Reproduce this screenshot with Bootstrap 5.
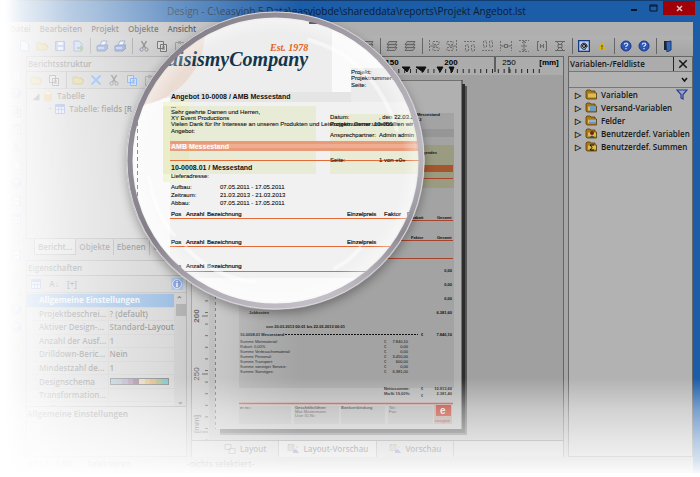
<!DOCTYPE html>
<html lang="de">
<head>
<meta charset="utf-8">
<meta name="viewport" content="width=device-width, initial-scale=1">
<title>Design - Projekt Angebot.lst</title>
<link href="https://cdn.jsdelivr.net/npm/bootstrap@5.3.0/dist/css/bootstrap.min.css" rel="stylesheet">
<style>
body{font:600 8px/14px "Open Sans","Noto Sans",sans-serif;color:#151515;background:#fff;overflow-x:hidden}
button{font:inherit;color:inherit;background:none;border:0;padding:0}
svg{display:block}
.app-window{background:#a6a6a6;border-right:7px solid #1c5da8;box-shadow:inset 0 -5px #4d86c4}
.title-row{height:22px;background:#1c5da8;margin-right:-7px;border-top:1px solid #123d70;color:#0b1c33;font-weight:400;font-size:10px;line-height:21px;padding-left:167px}
.close-btn{width:32px;height:14px;background:#a00008;color:#ddd;font-size:10px;line-height:14px;margin-right:5px}
.win-btn{width:19px;height:15px}
.menu-row{height:14px;background:#afafaf;padding-left:10px;gap:9px}
.tools{height:20px;padding-left:15px;background:linear-gradient(#b2b2b2,#a4a4a4)}
.tools button,.tools-sm button{width:18px;height:16px;display:grid;place-items:center}
.tools svg,.tools-sm svg,.strip svg{width:12px;height:12px}
.divider{width:6px;flex:none;display:grid;place-items:center}
.divider::after{content:"";width:1px;height:16px;background:#666}
.main-row{height:401px}
.strip{width:26px;padding:10px 0 0 9px;opacity:.6}
.strip button{height:18px;width:14px;display:grid;place-items:center}
.left-col{width:161px}
.right-col{width:125px;border:1px solid #666;background:#b2b2b2}
.pane{border:1px solid #777;background:#b2b2b2}
.pane-head{height:15px;border-bottom:1px solid #777;padding-left:1px;background:#acacac}
.tools-sm{height:17px;background:#a9a9a9;border-bottom:1px solid #888}
.tree{height:149px;padding:0 0 0 6px}
.tree-line{height:13px;gap:3px}
.tab-row{height:17px;padding-left:8px}
.tab-row button{padding:0 3px;height:16px;border-right:1px solid #666}
.tab-row .on{background:#bcbcbc;border:1px solid #666;border-top:0}
.props{height:114px;overflow:hidden}
.props table{width:149px;table-layout:fixed;height:123px;line-height:12px;border-collapse:collapse}
.props td{padding:0 0 0 1px;border:1px solid #a2a2a2;white-space:nowrap}
.key-col{width:81px}
.props td:first-child{padding-left:12px;border-left:0}
.props .group td{background:#3f7fc6;color:#dbe8f8;font-weight:700}
.sbar{width:11px;background:#a5a5a5;line-height:11px}
.sbar i{width:10px;height:12px;background:#707070}
.swatch{flex:1;height:5px}
.swatches{width:59px}
.center{border:1px solid #666;border-bottom:0;background:#a2a2a2}
.ruler-h{height:18px;background:#acacac;overflow:hidden}
.ruler-v{width:17px;background:#acacac;overflow:hidden}
.canvas-area{padding:5px 0 0 6px;overflow:hidden;background:#a0a0a0}
.bottom-tabs{height:17px;background:#b4b4b4;border-top:1px solid #555}
.bottom-tabs button{padding:0 12px;gap:4px;border-right:1px solid #777}
.bottom-tabs .on{background:#c4c4c4}
.status{height:16px;background:#a8a8a8;padding-left:28px}
.field-select{height:16px;border:0;border-bottom:1px solid #777;background:#b2b2b2;width:100%;appearance:none}
.field-list{padding:0 0 0 6px}
.field-list li{height:13px;gap:4px}
.field-list svg{width:12px;height:11px}
.fade-left,.fade-bottom,.fade-corner{inset:0;pointer-events:none}
.fade-left{background:linear-gradient(90deg,#fff 5px,rgba(255,255,255,.86) 25px,rgba(255,255,255,.64) 70px,rgba(255,255,255,.46) 130px,rgba(255,255,255,.3) 190px,transparent 300px)}
.fade-bottom{background:linear-gradient(transparent 378px,rgba(255,255,255,.42) 410px,rgba(255,255,255,.68) 440px,rgba(255,255,255,.82) 460px,#fff 477px)}
.fade-corner{background:radial-gradient(ellipse 240px 380px at 20px 300px,rgba(255,255,255,.4),rgba(255,255,255,.25) 60%,transparent)}
.lens{left:126px;top:11px;width:299px;height:299px;border-radius:50%;box-shadow:0 4px 10px rgba(0,0,0,.3)}
svg text{font-family:"Liberation Sans",Arial,sans-serif}
svg{font-weight:400}
text.brand{font-family:"Liberation Serif",serif;font-style:italic;font-weight:700}
</style>
<script src="https://cdn.jsdelivr.net/npm/bootstrap@5.3.0/dist/js/bootstrap.bundle.min.js"></script>
</head>
<body>
<svg width="0" height="0" class="position-absolute" aria-hidden="true">
<symbol id="i-new" viewBox="0 0 12 12"><path d="M2.500 1h5l3 3v7h-8z" fill="#c8d8f0" stroke="#4668b8"/></symbol>
<symbol id="i-open" viewBox="0 0 12 12"><path d="M1 10V3h4l1 1h4v2h2l-2 4z" fill="#c6a528" stroke="#866c10"/></symbol>
<symbol id="i-save" viewBox="0 0 12 12"><path d="M1.500 1.500h9v9h-9z" fill="#5d83cc" stroke="#27499c"/><path d="M4 2h5v3H4zM4 7h5v3H4z" fill="#cfdcf3"/></symbol>
<symbol id="i-export" viewBox="0 0 12 12"><path d="M2 1h5l3 3v7H2z" fill="#9bb6e6" stroke="#3357a6"/><path d="M5 7h3V5l4 3-4 3V9H5z" fill="#3b8b30"/></symbol>
<symbol id="i-print" viewBox="0 0 12 12"><path d="M1 6l3-1h8v3l-3 3H1z" fill="#436ec2" stroke="#213f87"/><path d="M4 5l2-4h5L9 5z" fill="#e4ecf8" stroke="#3357a6"/><path d="M2 8h6" stroke="#dde8fa"/></symbol>
<symbol id="i-cut" viewBox="0 0 12 12"><path d="M3.500 1l4 7M8.500 1l-4 7" stroke="#333" stroke-width="1.500"/><circle cx="3.500" cy="9.500" r="1.600" fill="none" stroke="#335"/><circle cx="8.500" cy="9.500" r="1.600" fill="none" stroke="#335"/></symbol>
<symbol id="i-copy" viewBox="0 0 12 12"><path d="M1.500 1.500h6v7h-6zM4.500 4.500h6v7h-6z" fill="#bbb" stroke="currentColor"/><path d="M6 7h3M6 9h3" stroke="currentColor"/></symbol>
<symbol id="i-paste" viewBox="0 0 12 12"><path d="M1.500 2.500h8v9h-8z" fill="none" stroke="#666"/><path d="M4 1h3v3H4z" fill="#777"/></symbol>
<symbol id="i-stack" viewBox="0 0 12 12"><path d="M3 7.500h8l-2 3H1zM3 4.500h8l-2 3H1zM3 1.500h8l-2 3H1z" fill="#9c9c9c" stroke="#666"/></symbol>
<symbol id="i-alh" viewBox="0 0 12 12"><path d="M1.500 0v12M5 1.500h6v3H5zM5 7.500h6v3H5z" fill="none" stroke="#707070" stroke-dasharray="2 1"/><path d="M2 6h7" stroke="#707070"/></symbol>
<symbol id="i-alr" viewBox="0 0 12 12"><path d="M10.500 0v12M1 1.500h6v3H1zM1 7.500h6v3H1z" fill="none" stroke="#707070" stroke-dasharray="2 1"/><path d="M3 6h7" stroke="#707070"/></symbol>
<symbol id="i-alt" viewBox="0 0 12 12"><path d="M0 1.500h12M1.500 5v6h3V5zM7.500 5v6h3V5z" fill="none" stroke="#707070" stroke-dasharray="2 1"/></symbol>
<symbol id="i-alb" viewBox="0 0 12 12"><path d="M0 10.500h12M1.500 1v6h3V1zM7.500 1v6h3V1z" fill="none" stroke="#707070" stroke-dasharray="2 1"/></symbol>
<symbol id="i-wid" viewBox="0 0 12 12"><path d="M.5 1v10M11.500 1v10" stroke="#707070" stroke-dasharray="2 1"/><path d="M1 6h3M8 6h3M4.500 4.500h3v3h-3z" fill="none" stroke="#666"/></symbol>
<symbol id="i-hei" viewBox="0 0 12 12"><path d="M1 .5h10M1 11.500h10" stroke="#707070" stroke-dasharray="2 1"/><path d="M6 1v10M4 3l2-2 2 2M4 9l2 2 2-2M3 6h6" fill="none" stroke="#707070"/></symbol>
<symbol id="i-brk" viewBox="0 0 12 12"><path d="M3 1.500H1.500v9H3M9 1.500h1.500v9H9M4.500 4v4M7.500 4v4M5 6h2" fill="none" stroke="#666"/></symbol>
<symbol id="i-hgl" viewBox="0 0 12 12"><path d="M1 1.500h10M1 10.500h10M4 4.500h4v3H4zM3 2l2 2M9 2L7 4M3 10l2-2M9 10L7 8" fill="none" stroke="#666"/></symbol>
<symbol id="i-at" viewBox="0 0 12 12"><path d="M.5.500h11v11H.5z" fill="#b9c9e6" stroke="#173a84" stroke-width="1.500"/><circle cx="6" cy="6" r="1.500" fill="none" stroke="#111"/><path d="M7.500 4.500v2.500h1.500V6a3 3 0 1 0-1 2.500" fill="none" stroke="#111"/></symbol>
<symbol id="i-warn" viewBox="0 0 12 12"><path d="M6 2l4 8H2z" fill="#d8b800"/><path d="M6 5v2.500M6 8.300v1" stroke="#333"/></symbol>
<symbol id="i-help" viewBox="0 0 12 12"><circle cx="6" cy="6" r="5" fill="#2d55b4" stroke="#1a378a"/><path d="M4.200 4.600q.2-1.600 1.900-1.600 1.700.1 1.700 1.500Q7.700 5.500 6 6.200V7M6 8v1.300" fill="none" stroke="#dce6fa" stroke-width="1.200"/></symbol>
<symbol id="i-info" viewBox="0 0 12 12"><path d="M0 0h12v12H0z" fill="#5f93d6"/><circle cx="6" cy="6" r="4.500" fill="#2d55c4" stroke="#dce6fa" stroke-width=".8"/><path d="M6 5v4M6 3v1.200" stroke="#fff" stroke-width="1.400"/></symbol>
<symbol id="i-door" viewBox="0 0 12 12"><path d="M2 1h7v9H2z" fill="#222"/><path d="M4 2l5-1v9l-4 2z" fill="#3568b4" stroke="#173a74"/></symbol>
<symbol id="i-x" viewBox="0 0 12 12"><path d="M1.500 1.500l9 9M10.500 1.500l-9 9" stroke="currentColor" stroke-width="1.800"/></symbol>
<symbol id="i-folder" viewBox="0 0 12 11"><path d="M1 9V2l1-1h3l1 1h4v2h1.500v6H2z" fill="#a77a16" stroke="#5b3d08" stroke-width=".8"/><path d="M3 4.500h8v4H3z" fill="#ddbc55"/></symbol>
<symbol id="i-db" viewBox="0 0 12 12"><path d="M2 3v7q4 3 8 0V3z" fill="#c38b2a"/><ellipse cx="6" cy="3" rx="4" ry="1.800" fill="#e9c776" stroke="#a97a22" stroke-width=".6"/></symbol>
<symbol id="i-grid" viewBox="0 0 12 12"><path d="M1.500 1.500h9v9h-9z" fill="#b9cdf2" stroke="#2950b0"/><path d="M2 3h8" stroke="#2950b0" stroke-width="2"/><path d="M4.500 3v7M7.500 3v7M2 6.500h8" stroke="#2950b0" stroke-width=".8"/></symbol>
<symbol id="i-layout" viewBox="0 0 12 12"><path d="M1 1.500h6v5H1zM5 5.500h6v5H5z" fill="#bbb" stroke="#555"/></symbol>
<symbol id="i-prev" viewBox="0 0 12 12"><path d="M1 1.500h6v6H1z" fill="#999" stroke="#666" stroke-dasharray="2 1"/><path d="M6 8l3-2 3 4H6z" fill="#3342a8"/><path d="M9 3h2v2H9z" fill="#b8a530"/></symbol>
</svg>

<div class="position-relative">
<div class="app-window d-flex flex-column">
 <header class="title-row d-flex align-items-start">
  <span class="flex-grow-1 text-nowrap">Design - C:\easyjob 5 Data\easyjobde\shareddata\reports\Projekt Angebot.lst</span>
  <button class="win-btn" aria-label="Minimieren"><svg viewBox="0 0 19 15"><path d="M6 9h6" stroke="#06142a" stroke-width="2"/></svg></button>
  <button class="win-btn" aria-label="Maximieren"><svg viewBox="0 0 19 15"><path d="M6 4h7v6H6zM6 5h7" fill="none" stroke="#06142a"/></svg></button>
  <button class="close-btn" aria-label="Schließen"><svg viewBox="0 0 32 14" height="14"><path d="M14 5l5 5M19 5l-5 5" stroke="#d8c0c0" stroke-width="1.500"/></svg></button>
 </header>
 <nav class="menu-row d-flex"><button>Datei</button><button>Bearbeiten</button><button>Projekt</button><button>Objekte</button><button>Ansicht</button></nav>
 <div class="tools d-flex align-items-center" role="toolbar" aria-label="Werkzeuge">
  <button aria-label="Neu"><svg><use href="#i-new"/></svg></button><button aria-label="Öffnen"><svg><use href="#i-open"/></svg></button><button aria-label="Speichern"><svg><use href="#i-save"/></svg></button><button aria-label="Export"><svg><use href="#i-export"/></svg></button><span class="divider"></span>
  <button aria-label="Drucken"><svg><use href="#i-print"/></svg></button><button aria-label="Probedruck"><svg><use href="#i-print"/></svg></button><span class="divider"></span>
  <button aria-label="Ausschneiden"><svg><use href="#i-cut"/></svg></button><button aria-label="Kopieren"><svg><use href="#i-copy"/></svg></button><button aria-label="Einfügen"><svg><use href="#i-paste"/></svg></button>
  <span class="flex-grow-1"></span>
  <button aria-label="Ebene"><svg><use href="#i-stack"/></svg></button><span class="divider"></span><button aria-label="Nach vorn"><svg><use href="#i-stack"/></svg></button><button aria-label="Nach hinten"><svg><use href="#i-stack"/></svg></button><span class="divider"></span>
  <button aria-label="Links"><svg><use href="#i-alh"/></svg></button><button aria-label="Rechts"><svg><use href="#i-alr"/></svg></button><button aria-label="Oben"><svg><use href="#i-alt"/></svg></button><button aria-label="Unten"><svg><use href="#i-alb"/></svg></button><button aria-label="Breite"><svg><use href="#i-wid"/></svg></button><button aria-label="Höhe"><svg><use href="#i-hei"/></svg></button><button aria-label="Abstand"><svg><use href="#i-brk"/></svg></button><button aria-label="Verteilen"><svg><use href="#i-hgl"/></svg></button><span class="divider"></span>
  <button aria-label="Objekt"><svg><use href="#i-at"/></svg></button><button aria-label="Warnung"><svg><use href="#i-warn"/></svg></button><span class="divider"></span>
  <button aria-label="Hilfe"><svg><use href="#i-help"/></svg></button><button aria-label="Kontexthilfe"><svg><use href="#i-help"/></svg></button><span class="divider"></span>
  <button class="me-3" aria-label="Beenden"><svg><use href="#i-door"/></svg></button>
 </div>

 <div class="main-row d-flex">
  <div class="strip d-flex flex-column">
   <button aria-label="Auswahl"><svg><use href="#i-new"/></svg></button><button aria-label="Lupe"><svg><use href="#i-help"/></svg></button><button aria-label="Formular"><svg><use href="#i-copy"/></svg></button><button aria-label="Text"><svg><use href="#i-grid"/></svg></button><button aria-label="Linie"><svg><use href="#i-cut"/></svg></button><button aria-label="Rechteck"><svg><use href="#i-new"/></svg></button><button aria-label="Kreis"><svg><use href="#i-help"/></svg></button><button aria-label="Bild"><svg><use href="#i-save"/></svg></button><button aria-label="Barcode"><svg><use href="#i-grid"/></svg></button><button aria-label="Tabelle"><svg><use href="#i-paste"/></svg></button><button aria-label="RTF"><svg><use href="#i-save"/></svg></button><button aria-label="Person"><svg><use href="#i-db"/></svg></button><button aria-label="Diagramm"><svg><use href="#i-export"/></svg></button><button aria-label="Messgerät"><svg><use href="#i-help"/></svg></button><button aria-label="Web"><svg><use href="#i-help"/></svg></button><button aria-label="Torte"><svg><use href="#i-db"/></svg></button>
  </div>

  <div class="left-col d-flex flex-column">
   <section class="pane">
    <div class="pane-head">Berichtsstruktur</div>
    <div class="tools-sm d-flex">
     <button aria-label="Neu"><svg><use href="#i-open"/></svg></button><button aria-label="Duplizieren"><svg><use href="#i-copy"/></svg></button><span class="divider"></span><button aria-label="Bearbeiten"><svg><use href="#i-open"/></svg></button><button class="text-primary" aria-label="Löschen"><svg><use href="#i-x"/></svg></button><button aria-label="Ausschneiden"><svg><use href="#i-cut"/></svg></button><button class="text-primary" aria-label="Kopieren"><svg><use href="#i-copy"/></svg></button><button aria-label="Einfügen"><svg><use href="#i-paste"/></svg></button>
    </div>
    <div class="tree">
     <div class="tree-line d-flex align-items-center"><span>◢</span><svg width="12" height="12"><use href="#i-db"/></svg>Tabelle</div>
     <div class="tree-line d-flex align-items-center ps-3"><span>·</span><svg width="12" height="12"><use href="#i-grid"/></svg><span class="text-nowrap">Tabelle: fields [R</span></div>
    </div>
   </section>
   <div class="tab-row d-flex mb-1"><button class="on">Bericht...</button><button>Objekte</button><button>Ebenen</button><button class="border-0">V</button></div>
   <section class="pane flex-grow-1">
    <div class="pane-head">Eigenschaften</div>
    <div class="tools-sm d-flex"><button aria-label="Kategorien"><svg><use href="#i-grid"/></svg></button><button>A↓</button><button>[+]</button><button class="ms-auto" aria-label="Info"><svg><use href="#i-info"/></svg></button></div>
    <div class="props d-flex border-bottom border-secondary">
     <table>
      <colgroup><col class="key-col"><col></colgroup>
      <tr class="group"><td colspan="2">Allgemeine Einstellungen</td></tr>
      <tr><td>Projektbeschrei...</td><td>? (default)</td></tr>
      <tr><td>Aktiver Design-...</td><td>Standard-Layout</td></tr>
      <tr><td>Anzahl der Ausf...</td><td>1</td></tr>
      <tr><td>Drilldown-Beric...</td><td>Nein</td></tr>
      <tr><td>Mindestzahl de...</td><td>1</td></tr>
      <tr><td>Designschema</td><td><div class="swatches d-flex border border-dark"><i class="swatch" style="background:#5f98a4"></i><i class="swatch" style="background:#708898"></i><i class="swatch" style="background:#6d6890"></i><i class="swatch" style="background:#704070"></i><i class="swatch" style="background:#4e2048"></i><i class="swatch" style="background:#cbb07c"></i><i class="swatch" style="background:#c8951f"></i><i class="swatch" style="background:#c87420"></i><i class="swatch" style="background:#6b8428"></i><i class="swatch" style="background:#139090"></i></div></td></tr>
      <tr><td>Transformation...</td><td></td></tr>
      <tr><td>Mailparameter</td><td></td></tr>
     </table>
     <div class="sbar d-flex flex-column align-items-center justify-content-between"><div>⌃<i class="d-block"></i></div><div>⌄</div></div>
    </div>
    <div class="fw-bold">Allgemeine Einstellungen</div>
   </section>
  </div>

  <main class="center flex-grow-1 d-flex flex-column mx-1">
   <div class="ruler-h"><svg width="371" height="18"><defs><pattern id="tick" x="259" width="5.850" height="18" patternUnits="userSpaceOnUse"><path d="M.5 12v4" stroke="#222"/></pattern></defs><path d="M20 0h270v18H20zM290 0h62v18h-62z" fill="url(#tick)"/><path d="M303 0v15M259 10v6M317 10v6M210 10h8l-3 5zM224 10h10l-3 5zM245 10h6l-3 5zM257 10h5l-2 5z" stroke="#111" fill="#111"/><text x="200" y="8" text-anchor="middle" font-size="8" font-weight="700">150</text><text x="259" y="8" text-anchor="middle" font-size="8" font-weight="700">200</text><text x="317" y="8" text-anchor="middle" font-size="8">250</text><text x="357" y="8" text-anchor="middle" font-size="8" font-weight="700">[mm]</text></svg></div>
   <div class="d-flex flex-grow-1 overflow-hidden">
    <div class="ruler-v"><svg width="17" height="366"><defs><pattern id="tickv" y="5" width="17" height="11.600" patternUnits="userSpaceOnUse"><path d="M13 .5h3" stroke="#222"/></pattern></defs><path d="M0 0h17v366H0z" fill="url(#tickv)"/><path d="M10 241h6M10 299h6M10 357h6" stroke="#222"/><g font-size="8" text-anchor="middle"><text transform="translate(7 241) rotate(-90)" font-weight="700">200</text><text transform="translate(7 299) rotate(-90)">250</text><text transform="translate(7 349) rotate(-90)">[mm]</text></g></svg></div>
    <div class="canvas-area flex-grow-1">
     <svg width="252" height="355" viewBox="215 80 252 355">
      <path d="M220 86h247v349H220z" fill="#555"/><path d="M220 84h245v349H220z" fill="#2b2b2b"/>
      <path d="M215 80h247v349H215z" fill="#b0b0b0"/><path d="M215 80h247v349" fill="none" stroke="#333"/>
      <path d="M215.500 80v349" stroke="#3636b8" stroke-dasharray="3 3"/>
      <path d="M239 113h215v275H239z" fill="#a3a3a3"/><path d="M400 129h54v8h-54z" fill="#969696"/><path d="M400 145h54v43h-54z" fill="#9a9b80"/>
      <path d="M400 165h53v7h-53z" fill="#a4562f"/><path d="M390 178.500h63M390 220.500h63M390 240.500h63M370 258.500h83" stroke="#a8442c"/>
      <path d="M239 403.500h214" stroke="#b83220" stroke-width="1.500"/>
      <path d="M239 406h52v18h-52zM294 406h45v18h-45zM341 406h44v18h-44zM388 406h45v18h-45z" fill="#a2a2a2"/>
      <g font-size="4" font-weight="700" fill="#111">
       <text x="417" y="116">Messestand</text><text x="417" y="121">13</text><text x="423" y="154">gendes</text>
       <text x="411" y="219">Rabatt</text><text x="437" y="219">Gesamt</text><text x="411" y="239">Faktor</text><text x="437" y="239">Gesamt</text>
       <g text-anchor="end"><text x="452" y="272">0,00</text><text x="452" y="286">0,00</text><text x="452" y="300">0,00</text><text x="452" y="314">6.381,60</text><text x="452" y="336">7.840,10</text><text x="452" y="390">10.913,60</text><text x="452" y="395">2.381,40</text></g>
       <text x="249" y="314">Jobkosten</text><text x="266" y="328">von 20.03.2013 00:01 bis 22.03.2013 00:01</text>
       <text x="240" y="336">10-0008.01 Messestand</text><path d="M285 334.500h133" stroke="#111" stroke-dasharray="2 1"/><text x="421" y="336">€</text>
       <text x="384" y="390">Nettosumme:</text><text x="384" y="395">MwSt 19,00%:</text><text x="421" y="390">€</text><text x="421" y="397">€</text>
       <text x="295" y="409">Geschäftsführer</text><text x="341" y="409">Bankverbindung</text><text x="240" y="409">er nr.:</text>
      </g>
      <g font-size="4" fill="#111"><text x="240" y="343">Summe Mietmaterial:</text><text x="240" y="348">Rabatt: 0,00%</text><text x="240" y="353">Summe Verbrauchsmaterial:</text><text x="240" y="358">Summe Personal:</text><text x="240" y="363">Summe Transport:</text><text x="240" y="368">Summe sonstiger Service:</text><text x="240" y="373">Summe Sonstiges:</text>
       <text x="384" y="343">€</text><text x="384" y="348">€</text><text x="384" y="353">€</text><text x="384" y="358">€</text><text x="384" y="363">€</text><text x="384" y="368">€</text><text x="384" y="373">€</text>
       <g text-anchor="end"><text x="408" y="343">7.840,10</text><text x="408" y="348">0,00</text><text x="408" y="353">0,00</text><text x="408" y="358">3.450,00</text><text x="408" y="363">600,00</text><text x="408" y="368">0,00</text><text x="408" y="373">6.381,00</text></g>
       <text x="295" y="413">Max Mustermann</text><text x="295" y="417">User ID-Nr.:</text><text x="389" y="409">Tel.:</text><text x="389" y="413">Fax:</text></g>
      <path d="M434 405h18v19h-18z" fill="#a58f88"/><path d="M436 405h15v11h-15z" fill="#b02010"/><text x="440" y="414" font-size="10" font-weight="700" fill="#e8d8d4">e</text><text x="435" y="422" font-size="4" font-weight="700" fill="#8c2018">easyjob</text>
     </svg>
    </div>
   </div>
   <div class="bottom-tabs d-flex">
    <span class="px-3"></span><button class="d-flex align-items-center ps-0"><svg width="12" height="12"><use href="#i-layout"/></svg>Layout</button><button class="on d-flex align-items-center px-2"><svg width="12" height="12"><use href="#i-prev"/></svg>Layout-Vorschau</button><button class="d-flex align-items-center"><svg width="12" height="12"><use href="#i-prev"/></svg>Vorschau</button>
   </div>
  </main>

  <aside class="right-col">
   <div class="pane-head d-flex"><label for="feld" class="flex-grow-1">Variablen-/Feldliste</label><button class="border-start border-dark px-1" aria-label="Schließen"><svg width="10" height="10"><use href="#i-x"/></svg></button></div>
   <div class="d-flex position-relative"><select class="field-select" id="feld"><option></option></select><svg class="position-absolute end-0 me-1 mt-1" width="7" height="7"><path d="M1 2l2.500 3L6 2" fill="none" stroke="#111" stroke-width="1.500"/></svg></div>
   <ul class="field-list list-unstyled m-0">
    <li class="d-flex align-items-center"><span>▷</span><svg><use href="#i-folder"/></svg>Variablen<svg class="ms-auto me-1" viewBox="0 0 12 11"><path d="M1 1h10L7 5.500V10L5 9V5.500z" fill="#9ab" stroke="#2a3c90" stroke-width="1.200"/></svg></li>
    <li class="d-flex align-items-center"><span>▷</span><svg viewBox="0 0 12 11"><use href="#i-folder"/><path d="M5 4h6v5H5z" fill="#6f9cc4"/></svg>Versand-Variablen</li>
    <li class="d-flex align-items-center"><span>▷</span><svg viewBox="0 0 12 11"><use href="#i-folder"/><path d="M4 4h7v5H4z" fill="#6c93c4"/><path d="M4 6h7" stroke="#ccd"/></svg>Felder</li>
    <li class="d-flex align-items-center"><span>▷</span><svg viewBox="0 0 12 11"><use href="#i-folder"/><circle cx="7" cy="5" r="2" fill="#722"/><path d="M4 10q3-5 6 0z" fill="#264"/></svg>Benutzerdef. Variablen</li>
    <li class="d-flex align-items-center"><span>▷</span><svg viewBox="0 0 12 11"><use href="#i-folder"/><path d="M9 4H5l2 2.500L5 9h4" fill="none" stroke="#111"/></svg>Benutzerdef. Summen</li>
   </ul>
  </aside>
 </div>
 <footer class="status d-flex"><span>97.17, -3.69</span><span class="ps-3">Selektieren</span><span class="ps-5 ms-2">-nichts selektiert-</span></footer>
</div>
<div class="position-absolute fade-left"></div><div class="position-absolute fade-corner"></div><div class="position-absolute fade-bottom"></div>

<div class="lens position-absolute">
 <svg width="299" height="299" viewBox="126 11 299 299">
  <defs>
   <clipPath id="glass"><circle cx="275.500" cy="160.500" r="145"/></clipPath>
   <linearGradient id="rim" x1="0" y1="0" x2="1" y2="1"><stop offset="0" stop-color="#716c76"/><stop offset=".2" stop-color="#8d8892"/><stop offset=".5" stop-color="#aaa5ad"/><stop offset=".8" stop-color="#c3bfc6"/><stop offset="1" stop-color="#b4afb8"/></linearGradient>
   <linearGradient id="rim2" x1="0" y1="0" x2="0" y2="1"><stop offset=".45" stop-color="#77727c" stop-opacity="0"/><stop offset=".75" stop-color="#6d6872" stop-opacity=".6"/><stop offset=".95" stop-color="#77727c" stop-opacity="0"/></linearGradient>
   <radialGradient id="shade"><stop offset=".88" stop-color="#fff" stop-opacity="0"/><stop offset=".97" stop-color="#fff" stop-opacity=".35"/><stop offset="1" stop-color="#ddd" stop-opacity=".3"/></radialGradient>
  </defs>
  <g clip-path="url(#glass)">
   <path d="M126 11h299v299H126z" fill="#fafafa"/>
   <path d="M126 11h206v87H126z" fill="#ededed"/><circle cx="131" cy="32" r="74" fill="#eadcd3"/>
   <path d="M170 98h255v180H170z" fill="#f1f1f1"/><path d="M170 92h255v10H170z" fill="#e5e5e5"/><path d="M351 68h74v34h-74z" fill="#ebebeb"/>
   <path d="M163 102h26v80h-26z" fill="#f3f5d9"/><path d="M170 106h146v68H170zM330 114h95v60h-95z" fill="#e8ebd6"/><path d="M163 106h26v68h-26z" fill="#e4e8bd" opacity=".6"/>
   <path d="M137.500 115v92" stroke="#5050e0" stroke-dasharray="4 3"/>
   <path d="M170 141h255v10H170z" fill="#e99a78"/><path d="M170 144h255v4H170z" fill="#efae92"/>
   <path d="M170 160.500h255M170 218.500h255M170 246.500h255M170 271.500h255" stroke="#e36c36" stroke-width="1.200"/>
   <path d="M309 23h8" stroke="#111" stroke-width="2"/>
   <text class="brand" x="167" y="66" font-size="20" fill="#11364c">uisismyCompany</text><text class="brand" x="270" y="51" font-size="10" fill="#e36224">Est. 1978</text>
   <g font-weight="700" font-size="7" fill="#111"><text x="171" y="99">Angebot 10-0008 / AMB Messestand</text><text x="171" y="149" fill="#fff">AMB Messestand</text><text x="171" y="170">10-0008.01 / Messestand</text></g>
   <g font-size="6" fill="#111" stroke="#111" stroke-width=".1"><text x="351" y="74">Projekt:</text><text x="351" y="80">Projektnummer:</text><text x="351" y="87">Seite:</text>
    <text x="171" y="108">...</text><text x="171" y="114">Sehr geehrte Damen und Herren,</text><text x="171" y="120">XY Event Productions</text><text x="171" y="126">Vielen Dank für Ihr Interesse an unseren Produkten und Leistungen. Gerne unterbreiten wir Ihnen</text><text x="330" y="126">Projektnummer: 10-0008</text><text x="171" y="133">Angebot:</text>
    <text x="330" y="119">Datum:</text><text x="379" y="119">, den 22.03.2013</text><text x="330" y="137">Ansprechpartner:</text><text x="379" y="137">Admin admin</text><text x="330" y="162">Seite:</text><text x="379" y="162">1 von «0»</text>
    <text x="171" y="178">Lieferadresse:</text><text x="171" y="189">Aufbau:</text><text x="171" y="197">Zeitraum:</text><text x="171" y="205">Abbau:</text><text x="220" y="189">07.05.2011 - 17.05.2011</text><text x="220" y="197">21.03.2013 - 21.03.2013</text><text x="220" y="205">07.05.2011 - 17.05.2011</text></g>
   <g font-size="6" fill="#111" stroke="#111" stroke-width=".2"><text x="171" y="216">Pos</text><text x="186" y="216">Anzahl</text><text x="207" y="216">Bezeichnung</text><text x="347" y="216">Einzelpreis</text><text x="384" y="216">Faktor</text><text x="407" y="216">R</text>
    <text x="171" y="244">Pos</text><text x="186" y="244">Anzahl</text><text x="207" y="244">Bezeichnung</text><text x="347" y="244">Einzelpreis</text>
    <text x="171" y="268">Pos</text><text x="186" y="268">Anzahl</text><text x="207" y="268">Bezeichnung</text></g>
   <circle cx="275.500" cy="160.500" r="145" fill="url(#shade)"/>
   <path d="M309 40q65 18 88 90M149 178q6 35 25 57M186 248q28 29 68 34M335 268q16-8 25-20" fill="none" stroke="#fff" stroke-width="4" stroke-linecap="round" opacity=".5"/>
  </g>
  <circle cx="275.500" cy="160.500" r="146" fill="none" stroke="url(#rim)" stroke-width="6"/><circle cx="275.500" cy="160.500" r="146" fill="none" stroke="url(#rim2)" stroke-width="5"/><circle cx="275.500" cy="160.500" r="148.500" fill="none" stroke="#d9d7dc"/>
 </svg>
</div>
</div>
</body>
</html>
